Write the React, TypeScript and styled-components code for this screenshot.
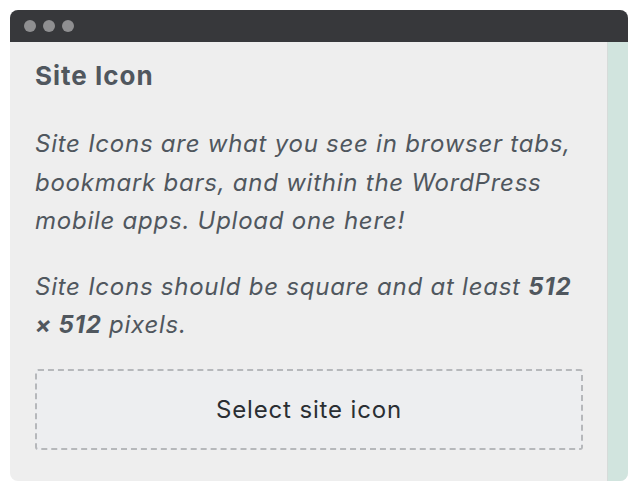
import React from "react";
import styled, { createGlobalStyle } from "styled-components";

const Global = createGlobalStyle`
  html, body { margin: 0; padding: 0; background: #ffffff; }
  body { font-family: Inter, "Noto Sans", sans-serif; }
`;

const Page = styled.div`
  padding: 10px;
  width: 638px;
  box-sizing: border-box;
`;

const Window = styled.div`
  width: 618px;
  border-radius: 8px;
  overflow: hidden;
  background: #eeeeee;
  display: flex;
  flex-direction: column;
`;

const TitleBar = styled.div`
  height: 32px;
  background: #37383b;
  display: flex;
  align-items: center;
  gap: 7px;
  padding-left: 14px;
`;

const Dot = styled.span`
  width: 12px;
  height: 12px;
  border-radius: 50%;
  background: #8f8f91;
`;

const Body = styled.div`
  display: flex;
`;

const Content = styled.div`
  flex: 1;
  padding: 19px 24px 31px 25px;
  color: #50575e;
`;

const Strip = styled.div`
  width: 20px;
  background: #d1e4de;
  border-left: 1px solid #d6dbd9;
`;

const Heading = styled.h2`
  margin: 0;
  font-size: 26px;
  font-weight: 700;
  line-height: 30px;
  letter-spacing: 1px;
`;

const Para = styled.p<{ $top: number }>`
  margin: ${(p) => p.$top}px 0 0;
  font-size: 24px;
  font-style: italic;
  line-height: 38.5px;
  letter-spacing: 0.75px;
`;

const DropBox = styled.button`
  margin-top: 24px;
  width: 100%;
  height: 81px;
  box-sizing: border-box;
  border: 2px dashed #b6b8bb;
  border-radius: 3px;
  background: #edeef0;
  color: #2a2e33;
  font-family: Inter, "Noto Sans", sans-serif;
  font-size: 24px;
  letter-spacing: 0.85px;
  display: flex;
  align-items: center;
  justify-content: center;
  padding: 0;
  cursor: pointer;
`;

export default function App() {
  return (
    <>
      <Global />
      <Page>
        <Window>
          <TitleBar>
            <Dot />
            <Dot />
            <Dot />
          </TitleBar>
          <Body>
            <Content>
              <Heading>Site Icon</Heading>
              <Para $top={34}>
                Site Icons are what you see in browser tabs, bookmark bars, and within the WordPress mobile apps. Upload one here!
              </Para>
              <Para $top={27}>
                Site Icons should be square and at least <strong>512 × 512</strong> pixels.
              </Para>
              <DropBox>Select site icon</DropBox>
            </Content>
            <Strip />
          </Body>
        </Window>
      </Page>
    </>
  );
}
